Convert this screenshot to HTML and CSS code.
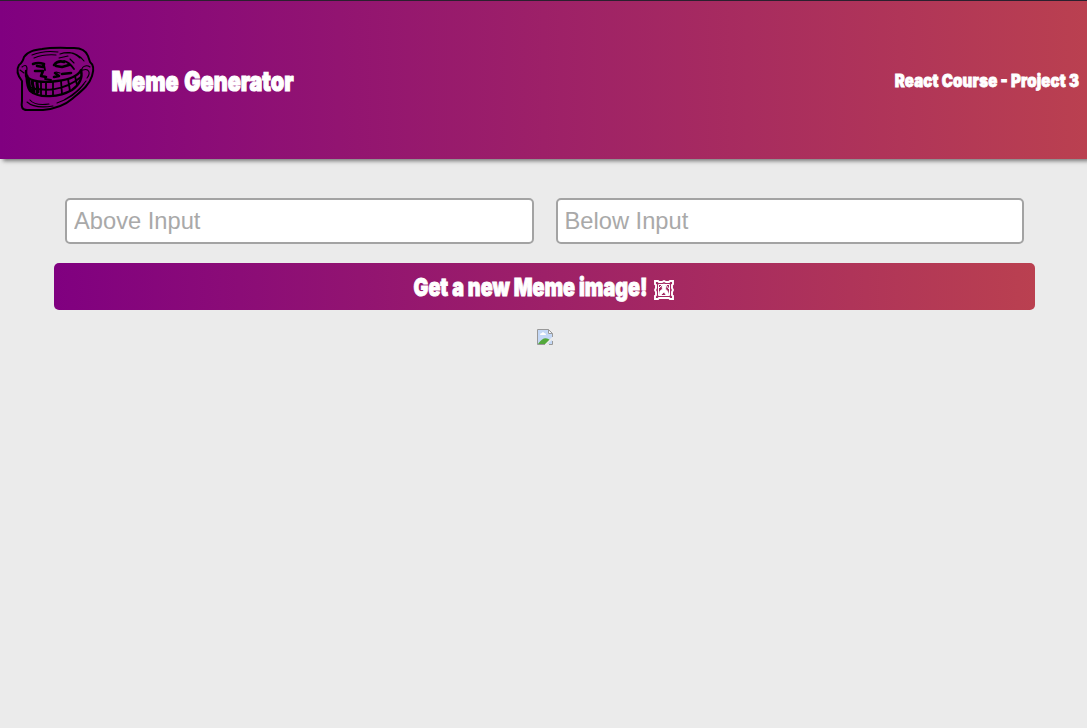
FILE: index.html
```html
<!DOCTYPE html>
<html lang="en">
<head>
<meta charset="utf-8">
<title>Meme Generator</title>
<link rel="stylesheet" href="styles.css">
</head>
<body>
<header class="header">
  <svg class="troll" viewBox="0 0 92 80" fill="none" stroke="#000" stroke-linecap="round" stroke-linejoin="round">
    <path stroke-width="2" d="M14 18C18 12 25 11 32 10C43 8 55 9 64 9C71 9 76 12 78 17L80 23C84 26 84 31 82 37C79 47 70 53 62 60C54 67 43 70 33 71L17 71C12 71 11 68 12 62C12 56 12 49 12 42C8 37 6 31 9 26C12 24 13 22 14 18Z"/>
    <path stroke-width="1.1" d="M22 16Q34 11 48 13M24 19Q34 15 46 16M50 15Q62 11 70 19M55 14Q66 12 74 22M12 28C17 24 18 29 16 34M10 31L14 34M80 28C76 25 71 28 72 32M73 31C79 29 81 34 77 39M20 61Q25 67 39 65M17 63Q25 70 43 67M47 64Q65 58 74 45M54 61Q68 53 76 42M60 20L64 24M49 19L58 17M46 33L50 34"/>
    <path stroke-width="2.6" d="M23 25Q28 23 34 25L33 28L27 27M25 32L33 32L31 37L36 38M44 26Q48 21 54 23M59 26L52 28L46 27M45 34L49 37L44 38M52 35L61 34"/>
    <path stroke-width="1.8" d="M54 22Q59 23 64 30M34 26L35 31M35 40L41 41"/>
    <path stroke-width="2.3" d="M16 32C17 39 16 47 20 52C29 60 50 58 62 51C69 46 73 39 71 31C67 39 56 41 47 42C34 44 21 43 16 37Z"/>
    <path stroke-width="1.8" d="M19 48C34 53 54 52 71 38M19 40L20 51M23 42V54M27 43V55M31 44V56M36 44V57M43 43V57M51 42L52 55M58 40L60 52M65 37L67 46"/>
    <path stroke-width="3" d="M17 37L20 50L24 53M22 43L24 51M27 44L28 53"/>
  </svg>
  <svg class="title" viewBox="0 0 184 32"><text x="1.500" y="24" textLength="182" lengthAdjust="spacingAndGlyphs">Meme Generator</text></svg>
  <svg class="course" viewBox="0 0 186 24"><text transform="scale(.88 1)" x="0.8" y="17" textLength="209.500">React Course - Project 3</text></svg>
</header>
<main class="main">
  <form class="form">
    <div class="fields">
      <input class="field" type="text" placeholder="Above Input">
      <input class="field" type="text" placeholder="Below Input">
    </div>
    <button class="submit" type="button">
      <svg class="label" viewBox="0 0 236 32"><text x="0.5" y="25" textLength="234" lengthAdjust="spacingAndGlyphs">Get a new Meme image!</text></svg>
      <svg class="frame" viewBox="0 0 20 20" fill="none" stroke="#fff">
        <path stroke-width="1.9" d="M1 1H4L5 2H8L10 1L12 2H15L16 1H19V4L18 5V8L19 10L18 12V15L19 16V19H16L15 18H5L4 19H1V16L2 15V12L1 10L2 8V5L1 4Z"/>
        <path stroke-width="1" d="M4.500 4.500H15.500V15.500H4.500ZM5 8L8 5M12 5L15 9"/>
        <path fill="#fff" stroke-width=".7" d="M8 7Q8 4 10 4Q12 4 12 7L11.500 9L13.500 11L15 15H12L10 12L7 15H5L6 11L8.500 9Z"/>
      </svg>
    </button>
  </form>
  <svg class="broken" viewBox="0 0 16 16">
    <path fill="#c4d8f6" d="M1 1H11L15 5V15H1Z"/>
    <path fill="#fff" d="M3 6Q3 4 5 4Q6 2 7 4Q9 4 9 6ZM11 1V5H15Z"/>
    <path fill="#53a93b" d="M1 15Q7 6 13 11L10 15Z"/>
    <path fill="none" stroke="#999" d="M15.500 8V4.500L11.500.500H.500V15.500H8M11.500.500V4.500H15.500M12 15.500H15.500V12"/>
    <path stroke="#ebebeb" stroke-width="1.8" d="M8.500 16L16 8.500"/>
  </svg>
</main>
</body>
</html>
```
FILE: styles.css
```css
* {
  box-sizing: border-box;
}

body {
  margin: 0;
  min-height: 728px;
  background: #ebebeb;
  font-family: "Liberation Sans", Arial, sans-serif;
}

.header {
  display: flex;
  align-items: center;
  height: 159px;
  padding: 0 7px 0 10px;
  border-top: 1px solid #2b202e;
  background: linear-gradient(90deg, #800080, #ba4050) border-box;
  box-shadow: 3px 2px 4px rgba(0, 0, 0, 0.5);
}

.troll {
  width: 92px;
  height: 80px;
  margin-top: -3px;
}

.title,
.course,
.label {
  overflow: visible;
  fill: #fff;
  stroke: #fff;
  stroke-width: 1.2px;
  font-family: Impact, Inter, sans-serif;
  font-weight: 900;
}

.title {
  width: 184px;
  height: 32px;
  margin: 6px 0 0 8px;
  font-size: 27.5px;
  word-spacing: 2px;
}

.course {
  width: 186px;
  height: 24px;
  margin: 3px 0 0 auto;
  font-size: 17px;
  stroke-width: 0.8px;
}

.main {
  display: flex;
  flex-direction: column;
  align-items: center;
  padding: 39px 52px 0 54px;
}

.form {
  width: 100%;
}

.fields {
  display: flex;
  gap: 22px;
  padding: 0 11px;
}

.field {
  flex: 1;
  min-width: 0;
  height: 46px;
  padding: 0 7px;
  border: 2px solid #a3a3a3;
  border-radius: 5px;
  background: #fff;
  font: 23.7px "Liberation Sans", Arial, sans-serif;
}

.field::placeholder {
  color: #a9a9a9;
}

.submit {
  display: flex;
  align-items: center;
  justify-content: center;
  gap: 5px;
  width: 100%;
  height: 47px;
  margin-top: 19px;
  padding: 0 3px 0 0;
  border: 0;
  border-radius: 5px;
  background: linear-gradient(90deg, #800080, #ba4050);
}

.label {
  width: 236px;
  height: 32px;
  font-size: 24.5px;
  stroke-width: 0.9px;
}

.frame {
  width: 20px;
  height: 20px;
  margin-top: 7px;
}

.broken {
  width: 16px;
  height: 16px;
  margin-top: 19px;
}
```
